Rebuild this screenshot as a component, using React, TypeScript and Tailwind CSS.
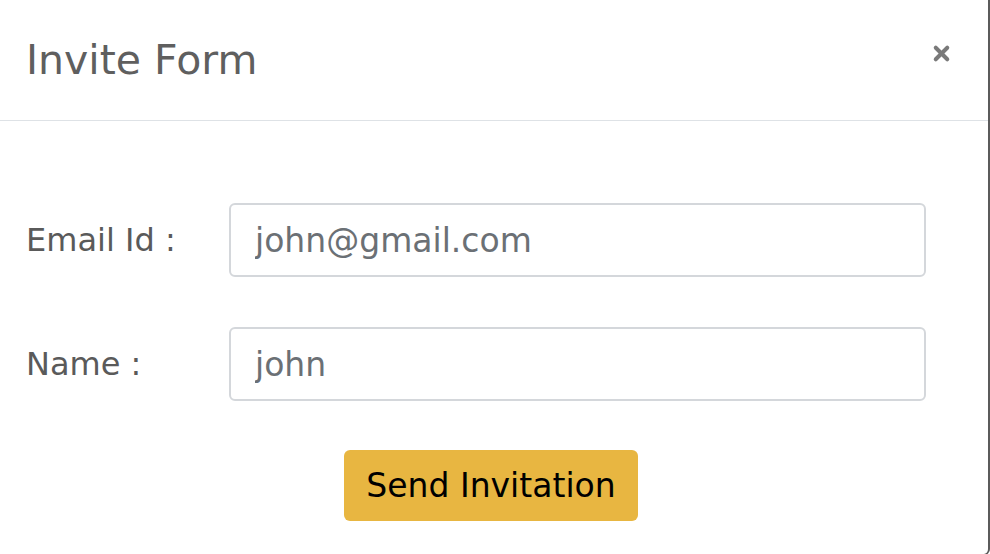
import { X } from 'lucide-react'

export default function App() {
  return (
    <div className="h-[554px] w-[990px] overflow-hidden bg-white">
      <div className="flex h-[555px] w-[990px] flex-col rounded-br-[6px] border-r-2 border-b border-[#5b5b5b] bg-white font-['DejaVu_Sans',sans-serif]">
        {/* header */}
        <div className="flex h-[121px] shrink-0 items-center justify-between border-b border-[#dee2e6] pr-[35px] pl-[26px]">
          <h1 className="text-[41px] leading-none text-[#5f5f5f]">Invite Form</h1>
          <button className="mb-[14px] text-[#7a7a7a]">
            <X size={23} strokeWidth={4.2} />
          </button>
        </div>

        {/* body */}
        <div className="flex flex-col pt-[82px] pr-[62px] pl-[26px]">
          {[
            { label: 'Email Id :', value: 'john@gmail.com' },
            { label: 'Name :', value: 'john' },
          ].map(({ label, value }, i) => (
            <div key={label} className={`flex items-center ${i > 0 ? 'mt-[50px]' : ''}`}>
              <label className="w-[203px] shrink-0 text-[32px] text-[#5a5a5a]">{label}</label>
              <input
                readOnly
                value={value}
                className="h-[74px] flex-1 rounded-[6px] border-2 border-[#d4d7db] px-[24px] text-[33px] text-[#6b7075] outline-none"
              />
            </div>
          ))}

          <div className="mt-[49px] flex justify-center pl-[30px]">
            <button className="h-[71px] w-[294px] rounded-[6px] bg-[#e8b641] text-[33px] text-black">
              Send Invitation
            </button>
          </div>
        </div>
      </div>
    </div>
  )
}
